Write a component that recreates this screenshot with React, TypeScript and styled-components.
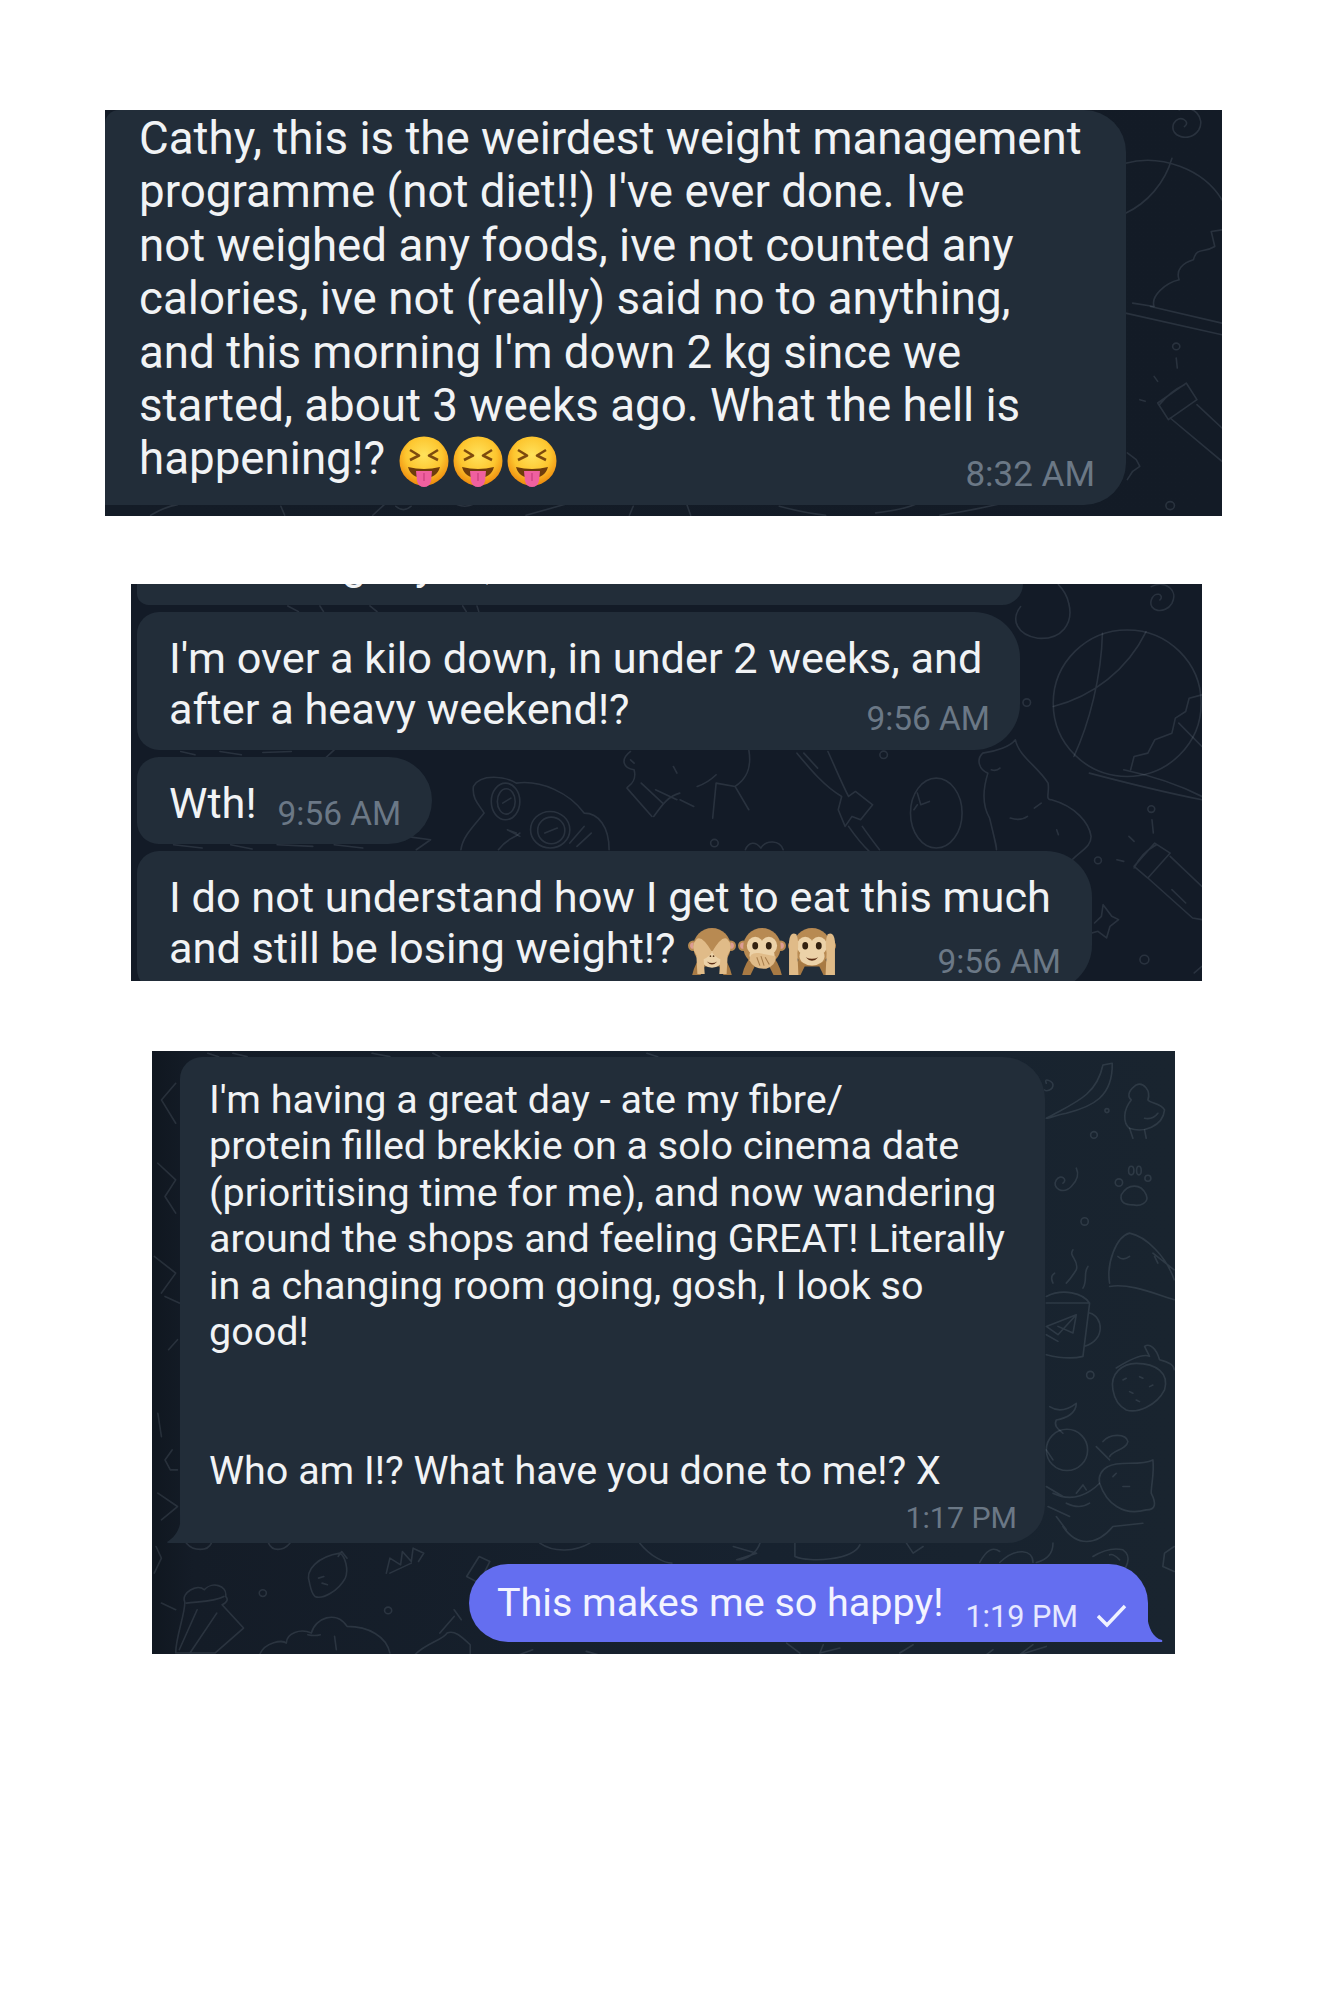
import styled, { createGlobalStyle } from "styled-components";

const GlobalStyle = createGlobalStyle`
  html, body {
    margin: 0;
    background: #fff;
  }
  body {
    font-family: Roboto, "Liberation Sans", sans-serif;
  }
`;

const Page = styled.div`
  display: flex;
  flex-direction: column;
  min-height: 2000px;
  padding-top: 110px;
  box-sizing: border-box;
`;

const Panel = styled.section<{ $left: number; $width: number; $height: number; $gap: number; $bg: string }>`
  position: relative;
  overflow: hidden;
  flex-shrink: 0;
  display: flex;
  flex-direction: column;
  box-sizing: border-box;
  margin: ${(p) => p.$gap}px 0 0 ${(p) => p.$left}px;
  width: ${(p) => p.$width}px;
  height: ${(p) => p.$height}px;
  background: ${(p) => p.$bg};
`;

const Wallpaper = styled.svg`
  position: absolute;
  inset: 0;
  width: 100%;
  height: 100%;
  fill: none;
  stroke: rgba(190, 205, 225, 0.13);
  stroke-width: 1.6;
  stroke-linecap: round;
  stroke-linejoin: round;

  path, circle, ellipse {
    vector-effect: non-scaling-stroke;
  }
`;

const Bubble = styled.div<{ $width: number; $size: number; $leading: number; $radius: string }>`
  position: relative;
  flex-shrink: 0;
  box-sizing: border-box;
  width: ${(p) => p.$width}px;
  border-radius: ${(p) => p.$radius};
  background: #222d39;
  color: #f1f3f5;
  font-size: ${(p) => p.$size}px;
  line-height: ${(p) => p.$leading}px;
`;

const Line = styled.div`
  min-height: 1lh;
  white-space: nowrap;
`;

const LastLine = styled(Line)`
  display: flex;
  align-items: center;
  justify-content: space-between;
`;

const Time = styled.span<{ $size: number; $shift: number }>`
  flex-shrink: 0;
  position: relative;
  top: ${(p) => p.$shift}px;
  font-size: ${(p) => p.$size}px;
  color: #6b7886;
`;

const TimeRow = styled.div`
  display: flex;
  justify-content: flex-end;
`;

const EmojiRow = styled.span<{ $gap: number; $offset: number }>`
  display: inline-flex;
  gap: ${(p) => p.$gap}px;
  margin-left: ${(p) => p.$offset}px;
  vertical-align: middle;
`;

/* first panel */
const WeirdestBubble = styled(Bubble)`
  padding: 2px 31px 17px 34px;
`;

/* second panel */
const Thread = styled.div`
  position: relative;
  display: flex;
  flex-direction: column;
  gap: 7px;
  padding-left: 6px;
`;

const StubBubble = styled(Bubble)`
  display: flex;
  justify-content: space-between;
  height: 21px;
  padding: 0 28px 0 205px;
  overflow: hidden;
`;

const StubText = styled.span`
  margin-top: -44px;
  word-spacing: 38px;
`;

const StubTime = styled(Time)`
  margin-top: -38px;
`;

const KiloBubble = styled(Bubble)`
  padding: 21px 30px 15px 32px;
`;

const WthBubble = styled(Bubble)`
  display: flex;
  align-items: center;
  gap: 21px;
  height: 87px;
  padding: 6px 0 0 32px;
`;

const MonkeyBubble = styled(Bubble)`
  padding: 21px 31px 15px 32px;
`;

/* third panel */
const LongBubble = styled(Bubble)`
  margin: 6px 0 0 28px;
  padding: 20px 28px 2px 29px;
`;

const SentBubble = styled(Bubble)`
  display: flex;
  align-items: center;
  align-self: flex-end;
  margin: 21px 27px 0 0;
  height: 78px;
  padding: 0 21px 0 28px;
  background: #646ef0;
  color: #f3f4ff;
`;

const SentTime = styled.span`
  position: relative;
  top: 14px;
  margin-left: 22px;
  font-size: 30.6px;
  color: #e6e8ff;
`;

const CheckIcon = styled.svg`
  position: relative;
  top: 13px;
  margin-left: 19px;
  width: 30px;
  height: 24px;
  fill: none;
  stroke: #f0f2ff;
  stroke-width: 3.4;
`;

const Tail = styled.svg<{ $side: "left" | "right"; $color: string }>`
  position: absolute;
  bottom: 0;
  ${(p) => (p.$side === "left" ? "left: -13px;" : "right: -15px;")}
  width: ${(p) => (p.$side === "left" ? 14 : 16)}px;
  height: 28px;
  fill: ${(p) => p.$color};
`;

function SquintFace() {
  return (
    <svg width="50" height="52" viewBox="0 0 50 52">
      <defs>
        <radialGradient id="faceFill" cx="50%" cy="38%" r="60%">
          <stop offset="0%" stopColor="#ffe25c" />
          <stop offset="62%" stopColor="#fdc62f" />
          <stop offset="100%" stopColor="#ef8f10" />
        </radialGradient>
      </defs>
      <circle cx="25" cy="25" r="24.5" fill="url(#faceFill)" />
      <path d="M11 14 L20 19.5 L11 24 M39 14 L30 19.5 L39 24" fill="none" stroke="#7d4a0e" strokeWidth="2.6" strokeLinejoin="round" />
      <path d="M9 31 Q25 35 41 31 Q38 42 25 42 Q12 42 9 31Z" fill="#6e3c0c" />
      <path d="M17 35 L33 35 L32 45 Q30.5 51 25 51 Q19.5 51 18 45Z" fill="#f0609f" />
      <path d="M25 37 L25 45" stroke="#c93c7c" strokeWidth="1.2" />
    </svg>
  );
}

const MONKEY_FUR = "#b88a52";
const MONKEY_SKIN = "#ecd2a8";
const MONKEY_HAND = "#e0bb88";

function MonkeyBase({ children }: { children: React.ReactNode }) {
  return (
    <svg width="48" height="48" viewBox="0 0 46 46">
      <circle cx="5" cy="17" r="5" fill={MONKEY_FUR} />
      <circle cx="41" cy="17" r="5" fill={MONKEY_FUR} />
      <circle cx="5" cy="17" r="3" fill="#dc9c94" />
      <circle cx="41" cy="17" r="3" fill="#dc9c94" />
      <path d="M4 45 Q7 32 14 26 L32 26 Q39 32 42 45 L34 45 L30 37 L16 37 L12 45Z" fill="#a87a44" />
      <circle cx="23" cy="18" r="18" fill={MONKEY_FUR} />
      {children}
    </svg>
  );
}

function SeeNoEvil() {
  return (
    <MonkeyBase>
      <ellipse cx="23" cy="30" rx="10" ry="8" fill={MONKEY_SKIN} />
      <path d="M23 23 Q13 6 8 11 Q2 17 8 26 L9 44 L16 44 L15 30 Q20 28 23 23Z" fill={MONKEY_HAND} />
      <path d="M23 23 Q33 6 38 11 Q44 17 38 26 L37 44 L30 44 L31 30 Q26 28 23 23Z" fill={MONKEY_HAND} />
      <path d="M18 32 Q23 35 28 32 Q23 38 18 32Z" fill="#5b2d14" />
      <circle cx="21.5" cy="27" r=".8" fill="#5b3a1c" />
      <circle cx="24.5" cy="27" r=".8" fill="#5b3a1c" />
    </MonkeyBase>
  );
}

function SpeakNoEvil() {
  return (
    <MonkeyBase>
      <ellipse cx="16.5" cy="17" rx="8" ry="8.5" fill={MONKEY_SKIN} />
      <ellipse cx="29.5" cy="17" rx="8" ry="8.5" fill={MONKEY_SKIN} />
      <ellipse cx="23" cy="26" rx="12" ry="8" fill={MONKEY_SKIN} />
      <ellipse cx="16.5" cy="17" rx="2.8" ry="3.6" fill="#33210f" />
      <ellipse cx="29.5" cy="17" rx="2.8" ry="3.6" fill="#33210f" />
      <path d="M11 31 Q11 23 20 24 L36 27 Q37 36 27 39 Q15 40 11 31Z" fill={MONKEY_HAND} />
      <path d="M18 28 L21 36 M22 27 L25 36 M26 28 L30 35" stroke="#a67c4a" strokeWidth="1" />
    </MonkeyBase>
  );
}

function HearNoEvil() {
  return (
    <MonkeyBase>
      <ellipse cx="16.5" cy="17" rx="8" ry="8.5" fill={MONKEY_SKIN} />
      <ellipse cx="29.5" cy="17" rx="8" ry="8.5" fill={MONKEY_SKIN} />
      <ellipse cx="23" cy="27" rx="12" ry="9" fill={MONKEY_SKIN} />
      <ellipse cx="16.5" cy="17" rx="2.8" ry="3.6" fill="#33210f" />
      <ellipse cx="29.5" cy="17" rx="2.8" ry="3.6" fill="#33210f" />
      <path d="M17 28 Q23 31 29 28 Q23 35 17 28Z" fill="#5b2d14" />
      <path d="M1 45 L1 13 Q2 3 8 6 Q11 13 9 24 L10 45Z" fill={MONKEY_HAND} />
      <path d="M45 45 L45 13 Q44 3 38 6 Q35 13 37 24 L36 45Z" fill={MONKEY_HAND} />
    </MonkeyBase>
  );
}

function FirstWallpaper() {
  return (
    <Wallpaper>
      <g transform="translate(585,-20) scale(.357,.333)">
        <path d="M1385 110 C1405 95 1370 70 1355 100 C1340 140 1400 160 1425 120 C1445 85 1410 40 1370 60" />
        <path d="M1220 370 C1280 340 1330 280 1350 205 M1220 220 C1320 190 1440 240 1490 330" />
        <path d="M1490 420 L1460 425 L1470 470 C1440 490 1420 470 1410 510 C1380 520 1360 540 1370 570 C1330 580 1290 620 1300 650 L1240 640" />
        <path d="M1220 670 L1490 735 M1290 650 L1490 700" />
        <circle cx="1362" cy="770" r="10" />
        <path d="M1362 805 L1365 835 M1300 860 L1310 875 M1260 930 L1275 935" />
        <path d="M1310 940 L1390 880 L1420 930 L1340 990Z M1345 985 L1490 1115 M1420 945 L1490 1015 M1315 945 Q1345 905 1385 885" />
        <path d="M1225 1090 L1250 1110 L1260 1130 L1240 1145 L1225 1170" />
        <circle cx="1345" cy="1248" r="12" />
        <path d="M250 1250 Q320 1270 380 1277 M520 1270 Q600 1260 640 1240 M700 1277 Q800 1260 860 1245" />
      </g>
      <g transform="translate(15,-20) scale(.383,.333)">
        <path d="M80 1277 Q120 1250 150 1245 M420 1250 L430 1277 M660 1277 L690 1245 M720 1250 Q740 1270 760 1250 M880 1245 Q900 1255 920 1245 M1060 1277 L1160 1245 M1340 1250 L1330 1277 M1480 1245 L1490 1277" />
      </g>
    </Wallpaper>
  );
}

function SecondWallpaper() {
  return (
    <Wallpaper>
      <g transform="translate(549,-14) scale(.344,.333)">
        <path d="M1395 90 C1410 75 1380 60 1370 90 C1360 125 1410 135 1430 100 C1450 60 1410 30 1370 50" />
        <path d="M990 110 C960 150 980 195 1040 205 C1110 210 1145 160 1130 100 C1125 75 1115 60 1100 44" />
        <ellipse cx="1300" cy="400" rx="215" ry="220" />
        <path d="M1085 410 C1200 380 1300 300 1355 185 M1228 190 C1225 320 1190 460 1145 560" />
        <path d="M1517 375 L1480 385 L1470 425 L1440 445 L1430 490 L1380 510 L1360 550 L1320 560 L1310 600" />
        <path d="M1190 610 C1300 640 1420 670 1517 690 M1290 600 C1380 620 1460 650 1517 680 M1450 460 L1517 530" />
        <circle cx="1008" cy="398" r="11" />
        <circle cx="592" cy="555" r="11" />
        <circle cx="100" cy="820" r="11" />
        <circle cx="1215" cy="872" r="10" />
        <circle cx="1350" cy="1170" r="13" />
        <circle cx="1370" cy="718" r="10" />
        <path d="M1372 750 L1376 790 M1305 800 L1320 815 M1270 870 L1290 875" />
        <ellipse cx="745" cy="730" rx="75" ry="105" />
        <path d="M690 670 L700 705 L725 695 M690 705 L680 720" />
        <path d="M340 550 C380 600 420 650 470 680 L460 720 L480 770 L500 740 L525 750 L560 705 L510 665 L490 680 C470 640 450 590 430 545" />
        <path d="M360 550 L400 595 M530 770 C550 800 565 820 580 840 M490 770 C510 800 530 825 550 845" />
        <path d="M975 510 C960 530 920 545 880 550 C860 570 870 600 895 610 C880 660 880 710 900 745 C920 830 920 830 920 840 M975 510 C985 560 1040 590 1070 640 C1075 670 1060 690 1080 690 C1150 710 1190 760 1195 800 C1195 830 1170 840 1140 870" />
        <path d="M930 595 Q920 605 905 600 M960 745 Q990 755 1010 740 M1050 700 L1030 715 M1095 780 L1100 795" />
        <path d="M200 540 C210 600 190 630 160 650 L200 720 M160 650 L105 640 L95 745 M105 615 Q80 640 50 650 M40 710 L0 690" />
        <path d="M1320 890 L1380 820 L1425 850 L1360 925Z M1320 895 Q1340 850 1385 825 M1360 925 L1490 1045 L1517 1050 M1425 860 L1517 950 M1430 960 L1470 1000" />
        <path d="M1205 1060 L1225 1040 L1230 1005 L1255 1040 L1275 1050 L1250 1070 L1240 1105 L1215 1085 L1180 1095" />
        <path d="M190 840 C200 815 220 815 235 835 C250 810 290 810 300 840" />
        <path d="M1517 1190 L1495 1210" />
      </g>
      <g transform="translate(-11,-14) scale(.357,.333)">
        <path d="M990 650 C1010 610 1080 620 1110 640 C1180 630 1260 670 1300 730 C1340 730 1370 770 1370 840 M990 650 C985 690 1010 710 1020 730 C990 770 960 800 955 840 M1060 840 C1090 800 1100 810 1120 790" />
        <ellipse cx="1080" cy="695" rx="40" ry="55" />
        <ellipse cx="1082" cy="695" rx="25" ry="38" />
        <ellipse cx="1205" cy="780" rx="55" ry="55" />
        <ellipse cx="1208" cy="782" rx="38" ry="40" />
        <path d="M1072 700 L1095 685 M1190 790 L1225 775 M1110 790 L1085 780 L1120 800 M1260 820 L1300 770 M1280 830 L1320 790" />
        <path d="M1430 545 C1400 570 1410 595 1440 600 C1450 640 1420 650 1420 655 L1490 740 M1460 640 L1520 700 M1495 740 C1510 720 1530 680 1568 670 M1500 660 L1560 690" />
        <path d="M1430 570 L1440 580 M1550 590 L1560 610" />
        <path d="M170 545 L210 555 M280 545 L340 555 M400 548 L480 545 M600 540 L540 600" />
        <path d="M150 825 L230 835 M310 825 L370 838 M440 825 L540 830 M600 825 L680 835 M800 800 L870 810 L830 840" />
        <path d="M470 108 L500 125 M560 108 L570 125 M700 108 L720 125 M960 108 L970 125 M1000 108 L1005 125" />
      </g>
    </Wallpaper>
  );
}

function ThirdWallpaper() {
  return (
    <Wallpaper>
      <g transform="translate(548,-11) scale(.333,.333)">
        <path d="M1040 235 C1120 190 1190 170 1210 75 L1238 70 C1240 170 1180 200 1100 220 C1070 225 1050 235 1040 235" />
        <path d="M1040 130 C1030 110 1060 125 1060 135 C1060 150 1040 155 1035 150" />
        <path d="M1310 135 C1290 150 1280 165 1295 180 C1270 210 1270 250 1290 265 C1330 280 1390 260 1395 210 C1385 190 1350 190 1345 180 C1355 150 1330 125 1310 135Z" />
        <path d="M1335 235 Q1360 240 1375 220 M1290 265 L1300 295 M1335 270 L1340 295" />
        <circle cx="1183" cy="285" r="10" />
        <circle cx="1222" cy="212" r="6" />
        <circle cx="1155" cy="545" r="11" />
        <path d="M1090 430 C1105 420 1085 400 1070 420 C1055 445 1090 465 1115 440 C1140 415 1135 395 1130 385" />
        <path d="M1265 465 C1285 430 1325 430 1340 465 C1350 490 1320 500 1300 495 C1280 495 1260 490 1265 465Z" />
        <ellipse cx="1258" cy="428" rx="11" ry="11" />
        <ellipse cx="1295" cy="392" rx="8" ry="13" />
        <ellipse cx="1318" cy="392" rx="7" ry="13" />
        <ellipse cx="1345" cy="415" rx="9" ry="9" />
        <path d="M1230 730 C1220 670 1250 590 1290 580 C1340 590 1400 650 1424 720 M1424 780 C1360 760 1290 730 1230 740 M1375 670 L1365 650 M1255 650 Q1270 665 1290 650 M1360 640 L1424 690" />
        <path d="M1120 630 C1105 650 1140 660 1130 690 C1120 705 1115 715 1100 730 M1165 680 C1150 700 1165 720 1150 745 M1065 700 Q1050 710 1060 730" />
        <path d="M1040 770 C1090 745 1150 760 1170 790 L1150 950 C1110 960 1060 950 1040 945 M1170 820 C1210 830 1220 900 1155 920 M1040 790 C1080 790 1130 790 1170 790" />
        <path d="M1130 825 L1040 860 L1075 885 L1130 825 L1120 880 L1075 860 M1040 885 L1075 905" />
        <path d="M1250 985 C1290 960 1330 940 1350 950 L1335 920 C1350 910 1370 925 1380 960 C1400 965 1424 975 1424 990" />
      </g>
      <g transform="translate(548,319) scale(.333,.333)">
        <path d="M1240 60 C1230 10 1270 -20 1310 -20 C1370 -20 1410 10 1395 60 C1370 110 1310 130 1280 120 C1260 110 1245 90 1240 60Z" />
        <path d="M1270 30 L1280 25 M1320 20 L1330 25 M1290 65 L1300 70 M1350 50 L1360 45 M1310 90 L1320 95" />
        <circle cx="1172" cy="15" r="11" />
        <path d="M1050 110 C1080 130 1110 115 1130 100 C1130 130 1100 145 1070 150 C1060 170 1080 180 1090 190" />
        <circle cx="1102" cy="240" r="62" />
        <path d="M1040 240 L1060 270 M1190 230 L1230 270 M1040 350 L1090 380 M1045 410 L1110 440 M1060 370 C1120 400 1170 370 1200 340" />
        <path d="M1210 215 C1230 190 1280 190 1285 215 C1280 240 1240 240 1230 260" />
        <path d="M1225 290 C1260 270 1320 290 1360 270 C1365 310 1355 340 1355 370 C1370 400 1370 420 1340 420 C1270 440 1220 400 1200 340 C1195 320 1205 300 1225 290Z" />
        <path d="M1240 320 L1250 310 M1270 350 L1290 350 M1090 470 C1130 530 1190 530 1240 470 L1330 460 M1070 440 L1100 480" />
        <path d="M1130 370 L1150 345 L1160 360 M1100 400 Q1140 420 1170 400" />
        <path d="M1180 560 Q1230 530 1270 540 C1300 560 1280 600 1260 610 M1230 555 Q1240 550 1260 570" />
        <path d="M1424 530 L1395 550 L1390 590 L1424 605" />
        <path d="M1010 578 C1040 570 1060 550 1060 520 M900 578 C950 530 1000 540 1000 578 M840 578 C860 540 880 530 900 545 M620 520 L640 550 L670 530 M480 525 C460 570 330 580 285 560 L285 520 M180 520 C170 550 140 570 110 570 L170 550 L100 530 M260 820 L300 850 M370 825 L360 850 L420 835 M640 825 L600 850 M880 840 L860 855 M1000 825 L960 855 L1040 830" />
      </g>
      <g transform="translate(-12,319) scale(.357,.333)">
        <path d="M475 640 C460 600 500 560 560 550 C575 560 585 600 575 625 C555 665 510 690 490 680 C480 670 478 655 475 640Z M555 560 L565 545 L580 565 M500 625 L515 620 M510 640 L525 645" />
        <path d="M690 610 L700 565 L730 585 L735 545 L760 575 L765 535 L795 550 L780 575 M700 610 L760 580" />
        <path d="M125 695 C115 670 160 640 180 660 C200 635 245 645 240 680 C250 690 240 700 230 705 L290 775 L210 850 L100 850 C100 800 130 720 125 695Z M130 700 C170 695 210 695 235 680 M160 720 L110 840 M215 730 L140 850" />
        <circle cx="344" cy="670" r="10" />
        <circle cx="695" cy="722" r="10" />
        <path d="M335 855 C350 815 400 810 410 820 C410 790 450 775 480 790 C490 745 550 720 580 770 C640 770 690 800 700 850 M545 800 L550 840 M470 795 Q490 800 505 795" />
        <path d="M770 855 C800 820 850 810 860 790 C880 780 900 800 925 825 L925 855 M880 720 L900 750 M840 790 L880 740 M950 560 L980 575 L950 640 L915 620Z" />
        <path d="M130 520 C150 545 190 545 200 520 M360 520 C370 545 400 545 420 520 M1120 520 C1160 550 1220 545 1260 520 M1400 520 C1430 560 1470 580 1490 580 M1050 860 L1100 840 M1250 845 L1300 860" />
        <path d="M45 530 L60 565 L40 610 M90 240 L70 270 L85 300 L105 300 M50 130 L60 200 M50 370 L105 410 L60 450 M60 700 L100 720" />
      </g>
      <g transform="translate(-12,-11) scale(.357,.333)">
        <path d="M100 130 L60 180 L100 250 M50 370 L100 420 L70 470 L100 520 M40 650 L100 700 L60 760 M80 930 L105 900 M70 770 L110 790" />
        <path d="M190 40 L220 50 M260 40 L300 50 M650 40 L700 50 M820 40 L840 50 M1420 40 L1450 50" />
      </g>
    </Wallpaper>
  );
}

export default function App() {
  return (
    <Page>
      <GlobalStyle />

      <Panel $left={105} $width={1117} $height={406} $gap={0} $bg="linear-gradient(90deg, #141c27 0%, #131b26 100%)">
        <FirstWallpaper />
        <WeirdestBubble $width={1021} $size={45.7} $leading={53.4} $radius="14px 42px 42px 0">
          <Line>Cathy, this is the weirdest weight management</Line>
          <Line>programme (not diet!!) I've ever done. Ive</Line>
          <Line>not weighed any foods, ive not counted any</Line>
          <Line>calories, ive not (really) said no to anything,</Line>
          <Line>and this morning I'm down 2 kg since we</Line>
          <Line>started, about 3 weeks ago. What the hell is</Line>
          <LastLine>
            <span>
              happening!?
              <EmojiRow $gap={4} $offset={14}>
                <SquintFace />
                <SquintFace />
                <SquintFace />
              </EmojiRow>
            </span>
            <Time $size={35} $shift={14}>8:32 AM</Time>
          </LastLine>
        </WeirdestBubble>
      </Panel>

      <Panel $left={131} $width={1071} $height={397} $gap={68} $bg="#131b27">
        <SecondWallpaper />
        <Thread>
          <StubBubble $width={886} $size={43.3} $leading={50} $radius="0 0 40px 22px">
            <StubText>g y ,</StubText>
            <StubTime $size={33.4} $shift={0}>9:56 AM</StubTime>
          </StubBubble>
          <KiloBubble $width={883} $size={43.3} $leading={51} $radius="22px 46px 46px 22px">
            <Line>I'm over a kilo down, in under 2 weeks, and</Line>
            <LastLine>
              <span>after a heavy weekend!?</span>
              <Time $size={33.4} $shift={9}>9:56 AM</Time>
            </LastLine>
          </KiloBubble>
          <WthBubble $width={295} $size={43.3} $leading={51} $radius="22px 44px 44px 22px">
            <span>Wth!</span>
            <Time $size={33.4} $shift={10}>9:56 AM</Time>
          </WthBubble>
          <MonkeyBubble $width={955} $size={43.3} $leading={51} $radius="22px 46px 46px 22px">
            <Line>I do not understand how I get to eat this much</Line>
            <LastLine>
              <span>
                and still be losing weight!?
                <EmojiRow $gap={2} $offset={12}>
                  <SeeNoEvil />
                  <SpeakNoEvil />
                  <HearNoEvil />
                </EmojiRow>
              </span>
              <Time $size={33.4} $shift={12}>9:56 AM</Time>
            </LastLine>
          </MonkeyBubble>
        </Thread>
      </Panel>

      <Panel $left={152} $width={1023} $height={603} $gap={70} $bg="linear-gradient(90deg, #101720 0%, #141c27 4%, #17222f 60%, #19242f 100%)">
        <ThirdWallpaper />
        <LongBubble $width={865} $size={39.5} $leading={46.4} $radius="22px 42px 38px 0">
          <Line>I'm having a great day - ate my fibre/</Line>
          <Line>protein filled brekkie on a solo cinema date</Line>
          <Line>(prioritising time for me), and now wandering</Line>
          <Line>around the shops and feeling GREAT! Literally</Line>
          <Line>in a changing room going, gosh, I look so</Line>
          <Line>good!</Line>
          <Line />
          <Line />
          <Line>Who am I!? What have you done to me!? X</Line>
          <TimeRow>
            <Time $size={30.3} $shift={0}>1:17 PM</Time>
          </TimeRow>
          <Tail $side="left" $color="#222d39" viewBox="0 0 14 28">
            <path d="M14 0 C14 14 8 22 0 27 Q0 28 2 28 L14 28Z" />
          </Tail>
        </LongBubble>
        <SentBubble $width={679} $size={39.5} $leading={46.4} $radius="40px 40px 0 40px">
          <span>This makes me so happy!</span>
          <SentTime>1:19 PM</SentTime>
          <CheckIcon viewBox="0 0 30 24">
            <path d="M1 12 L10 21 L28 2" />
          </CheckIcon>
          <Tail $side="right" $color="#646ef0" viewBox="0 0 16 28">
            <path d="M0 0 C1 14 6 24 15 26 Q16 28 14 28 L0 28Z" />
          </Tail>
        </SentBubble>
      </Panel>
    </Page>
  );
}
